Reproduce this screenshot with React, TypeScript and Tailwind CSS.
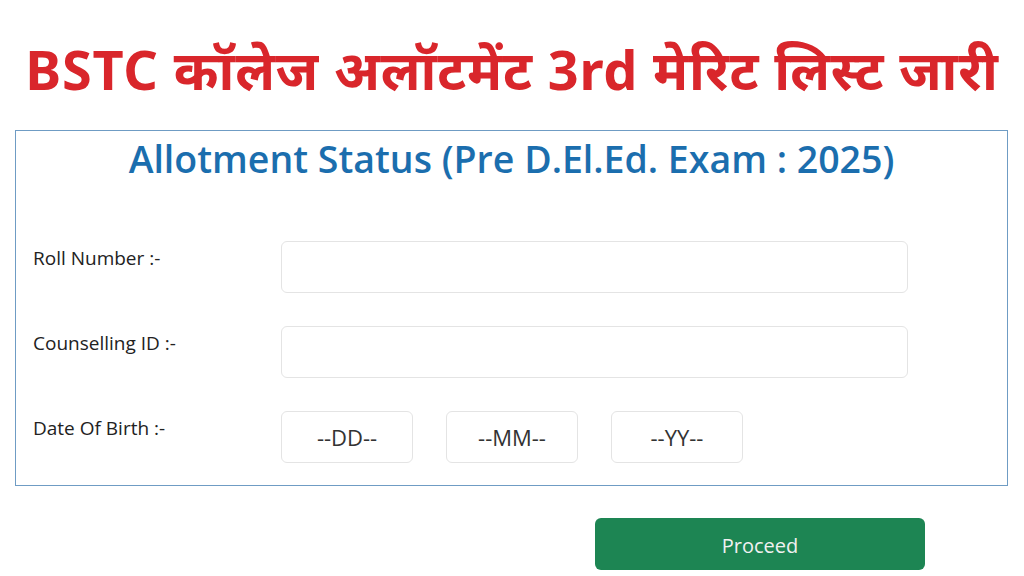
import React from 'react';

export default function App() {
  return (
    <div className="w-[1024px] h-[576px] bg-white overflow-hidden font-['Open_Sans',sans-serif]">
      {/* Headline */}
      <div className="h-[130px] flex items-start justify-center pt-[34px]">
        <h1 className="text-[54px] leading-[70px] font-bold text-[#d9262b] tracking-[0.8px] font-['Noto_Sans','Lato',sans-serif] whitespace-nowrap">
          BSTC कॉलेज अलॉटमेंट 3rd मेरिट लिस्ट जारी
        </h1>
      </div>

      {/* Form box */}
      <div className="mx-[15px] w-[993px] h-[356px] border border-[#6f9cc4] px-[17px]">
        <h2 className="text-center text-[37.5px] leading-[56px] text-[#1b6eae] font-semibold">
          Allotment Status (Pre D.El.Ed. Exam : 2025)
        </h2>

        <div className="mt-[54px] flex flex-col gap-[33px]">
          <Row label="Roll Number :-">
            <div className="w-[627px] h-[52px] border border-[#e4e4e4] rounded-md" />
          </Row>
          <Row label="Counselling ID :-">
            <div className="w-[627px] h-[52px] border border-[#e4e4e4] rounded-md" />
          </Row>
          <Row label="Date Of Birth :-">
            <div className="flex gap-[33px]">
              {['--DD--', '--MM--', '--YY--'].map((t) => (
                <div
                  key={t}
                  className="w-[132px] h-[52px] border border-[#e4e4e4] rounded-md flex items-center justify-center text-[22px] text-[#333]"
                >
                  {t}
                </div>
              ))}
            </div>
          </Row>
        </div>
      </div>

      {/* Action */}
      <div className="flex pl-[595px] pt-[32px]">
        <button className="w-[330px] h-[52px] rounded-md bg-[#1d8553] text-[#f1f1f1] text-[20px] pt-[3px]">
          Proceed
        </button>
      </div>
    </div>
  );
}

function Row({ label, children }: { label: string; children: React.ReactNode }) {
  return (
    <div className="flex items-start">
      <div className="w-[248px] pt-[3px] text-[19px] text-[#222]">{label}</div>
      {children}
    </div>
  );
}
